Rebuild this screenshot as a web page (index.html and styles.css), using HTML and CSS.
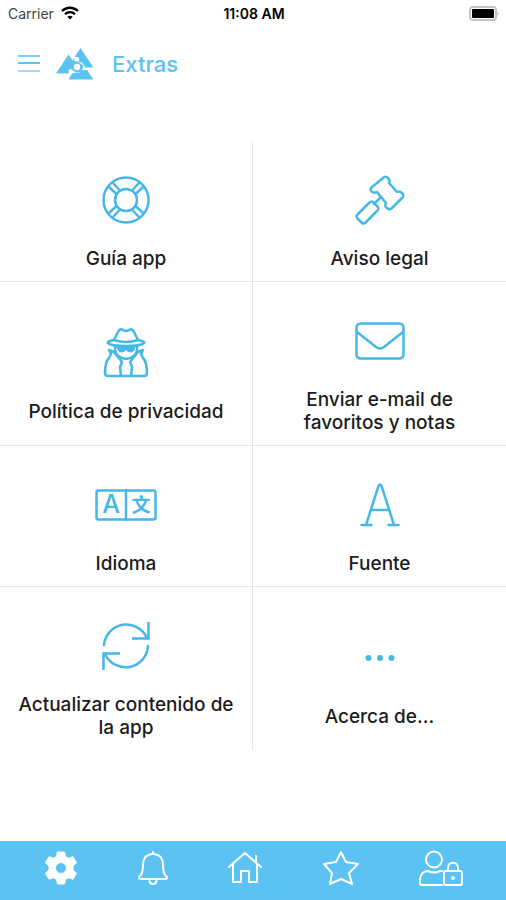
FILE: index.html
```html
<!DOCTYPE html>
<html lang="es">
<head>
    <meta charset="UTF-8">
    <meta name="viewport" content="width=device-width, initial-scale=1.0">
    <title>Extras</title>
    <link rel="stylesheet" href="styles.css">
</head>
<body>
    <div class="status_bar">
        <div class="carrier">
            <span>Carrier</span>
            <svg width="18" height="14" viewBox="0 0 18 14" fill="none" stroke="#000" stroke-width="2.4">
                <path d="M1 5C5.500 .7 12.500 .7 17 5"/>
                <path d="M4 8.200C7 5.500 11 5.500 14 8.200"/>
                <path d="M9 13.500L6.300 10.800Q9 8.700 11.700 10.800z" fill="#000" stroke="none"/>
            </svg>
        </div>
        <div class="clock">11:08 AM</div>
        <div class="battery">
            <svg width="31" height="15" viewBox="0 0 31 15">
                <rect x="1" y="1" width="26" height="13" rx="3" fill="#fff" stroke="#c4c4c4" stroke-width="2"/>
                <rect x="3" y="3" width="22" height="9" rx="1" fill="#000"/>
                <path d="M28.500 5.500q2 2 0 4z" fill="#aaa"/>
            </svg>
        </div>
    </div>

    <header class="top_bar">
        <button class="menu_btn" type="button" aria-label="Menú">
            <svg width="22" height="20" viewBox="0 0 22 20" stroke-width="2">
                <path d="M0 2h22" stroke="#7ccdf3"/>
                <path d="M0 9h22" stroke="#5bc2f1"/>
                <path d="M0 17h22" stroke="#a5d8f3"/>
            </svg>
        </button>
        <svg class="logo" width="38" height="32" viewBox="0 0 38 32">
            <path d="M24.500 0L37.500 19.500H28Q28 14 22 13.500Q25 10 21 9L18.500 9z"/>
            <path d="M12.500 6.500L18.500 15.500Q15 17 16 21Q13 20.500 12.500 23V25.500H0z"/>
            <path d="M12.500 31.500L17 24Q20.500 26.500 24.500 24Q25 21.500 28 22L31 22L37.500 31.500z"/>
            <path d="M17.500 10L22 13.500L28 18L26 23L21 25L15.500 21.500L15 16z"/>
            <circle cx="21" cy="19" r="3.200" fill="#fff"/>
            <path d="M17.500 11.500Q20 13.500 23 12M27.500 17.500Q29 21 26.500 22M14 21.500Q15 24.500 18 24.500" fill="none" stroke="#fff" stroke-width="1.500"/>
        </svg>
        <h1>Extras</h1>
    </header>

    <main class="tiles">
        <a class="tile" href="#guia">
            <span class="tile_icon">
                <svg width="50" height="50" viewBox="0 0 50 50">
                    <circle cx="25" cy="25" r="22.500"/>
                    <circle cx="25" cy="25" r="11"/>
                    <path d="M8 12l7.500 7M12 8l7 7.500M38 8l-7 7.500M42 12l-7.500 7M8 38l7.500-7M12 42l7-7.500M38 42l-7-7.500M42 38l-7.500-7"/>
                </svg>
            </span>
            <span>Guía app</span>
        </a>
        <a class="tile" href="#aviso">
            <span class="tile_icon">
                <svg width="50" height="50" viewBox="0 0 50 50">
                    <path d="M17 17c-2-2-2-3 0-5L28 3c2-2 3-2 5 0 2 2 2 3 1 5l8 9c2-1 3-1 5 1s2 3 0 5L37 33c-2 2-3 2-5 0-2-1-2-3-1-5l-9-11c-2 1-3 1-5 0z"/>
                    <path d="M26 22l-7 7"/>
                    <path d="M14 28L3 39c-2 2-2 3 0 5l3 3c2 2 3 2 5 0l11-11c2-2 2-3 0-5l-3-3c-2-2-3-2-5 0z"/>
                </svg>
            </span>
            <span>Aviso legal</span>
        </a>
        <a class="tile" href="#privacidad">
            <span class="tile_icon">
                <svg width="50" height="50" viewBox="0 0 50 50">
                    <path d="M13 12L17 4q2-4 5-2 3 2 6 0 3-2 5 2l4 8"/>
                    <path d="M13 12C8 13 6 14 7 15c3 3 11 3 18 3s15 0 18-3c1-1-1-2-6-3q-12 4-24 0z"/>
                    <path d="M14 18v4q1 8 11 9 10-1 11-9v-4"/>
                    <path d="M16 19h18l-1 3q-1 2-4 2-3 0-4-3-1 3-4 3-3 0-4-2z" fill="#45b8e8" stroke-width="1"/>
                    <path d="M13 24l-5-2 2 4-2 4c-4 4-4 11-4 15q0 3 3 3h36q3 0 3-3c0-4 0-11-4-15l-2-4 2-4-5 2"/>
                    <path d="M13 24l8 10-2 5 1 9M37 24l-8 10 2 5-1 9"/>
                </svg>
            </span>
            <span>Política de privacidad</span>
        </a>
        <a class="tile" href="#email">
            <span class="tile_icon">
                <svg width="50" height="38" viewBox="0 0 50 38">
                    <rect x="1.500" y="1.500" width="47" height="35" rx="4"/>
                    <path d="M2 10l19 15q4 3 8 0l19-15"/>
                </svg>
            </span>
            <span>Enviar e-mail de favoritos y notas</span>
        </a>
        <a class="tile" href="#idioma">
            <span class="tile_icon">
                <svg width="62" height="32" viewBox="0 0 62 32">
                    <rect x="1.500" y="1.500" width="59" height="29" rx="2"/>
                    <path d="M31 1v30"/>
                    <text class="glyph_latin" x="16" y="24">A</text>
                    <text class="glyph_cjk" x="46" y="23">文</text>
                </svg>
            </span>
            <span>Idioma</span>
        </a>
        <a class="tile" href="#fuente">
            <span class="tile_icon">
                <svg width="40" height="44" viewBox="0 0 40 44">
                    <path d="M6 42L18.500 3q1.500-3 3 0L34 42M10.500 27h19M1.500 42h10M28.500 42h10"/>
                </svg>
            </span>
            <span>Fuente</span>
        </a>
        <a class="tile" href="#actualizar">
            <span class="tile_icon">
                <svg width="50" height="50" viewBox="0 0 50 50">
                    <path d="M3 24A22.500 22.500 0 0 1 46 17M47 25A22.500 22.500 0 0 1 4 33"/>
                    <path d="M47.500 1v16.500H31M2.500 49V32.500H19" stroke-linejoin="miter" stroke-linecap="butt"/>
                </svg>
            </span>
            <span>Actualizar contenido de la app</span>
        </a>
        <a class="tile" href="#acerca">
            <span class="tile_icon">
                <svg class="dots" width="30" height="8" viewBox="0 0 30 8">
                    <circle cx="3.500" cy="4" r="3"/>
                    <circle cx="15" cy="4" r="3"/>
                    <circle cx="26.500" cy="4" r="3"/>
                </svg>
            </span>
            <span>Acerca de...</span>
        </a>
    </main>

    <nav class="tab_bar">
        <a href="#ajustes" aria-label="Ajustes">
            <svg width="32" height="34" viewBox="0 0 32 34">
                <path fill="#fff" fill-rule="evenodd" stroke-width="1" d="M12.500 1h7l1 4.500 3 1.700 4.500-1.500 3.500 6L28 15v4l3.500 3.300-3.500 6-4.500-1.500-3 1.700-1 4.500h-7l-1-4.500-3-1.700L4 28.300l-3.500-6L4 19v-4L.5 11.700l3.500-6 4.500 1.500 3-1.700zM16 11.500a5.500 5.500 0 1 0 0 11 5.500 5.500 0 1 0 0-11z"/>
            </svg>
        </a>
        <a href="#avisos" aria-label="Avisos">
            <svg width="30" height="34" viewBox="0 0 30 34">
                <path d="M15 1v2M15 3C8 3 5 8 5 14c0 7-1 9-3 11-2 2-1 3 1 3h24c2 0 3-1 1-3-2-2-3-4-3-11 0-6-3-11-10-11zM11.500 30q.5 3 3.500 3t3.500-3"/>
            </svg>
        </a>
        <a href="#inicio" aria-label="Inicio">
            <svg width="34" height="34" viewBox="0 0 34 34">
                <path d="M1 16L17 2l16 14M28 11V5M5 13v18h8V20h8v11h8V13"/>
            </svg>
        </a>
        <a href="#favoritos" aria-label="Favoritos">
            <svg width="36" height="34" viewBox="0 0 36 34">
                <path d="M18 1l5 10 12 2-9 9 3 11-11-5-11 5 2-11-8-9 12-2z"/>
            </svg>
        </a>
        <a href="#cuenta" aria-label="Cuenta">
            <svg width="44" height="36" viewBox="0 0 44 36">
                <circle cx="15" cy="9.500" r="8"/>
                <path d="M23 35H3q-2 0-2-2v-3c0-5 3-9 8-9 4 2 8 2 12 0h2"/>
                <rect x="25" y="21" width="18" height="14" rx="2"/>
                <path d="M29 21v-3c0-7 10-7 10 0v3"/>
                <circle cx="34" cy="28" r="1.500" fill="#fff" stroke-width="1"/>
            </svg>
        </a>
    </nav>
</body>
</html>
```
FILE: styles.css
```css
* {
    box-sizing: border-box;
}

body {
    margin: 0;
    min-height: 100vh;
    display: flex;
    flex-direction: column;
    background-color: #fff;
    color: #1c1c1c;
    font-family: Inter, "Liberation Sans", sans-serif;
}

svg {
    display: block;
}

a {
    color: inherit;
    text-decoration: none;
}

.status_bar {
    display: grid;
    grid-template-columns: 1fr auto 1fr;
    align-items: center;
    height: 26px;
    padding: 0 6px 0 8px;
    font-size: 14px;
}

.carrier {
    display: flex;
    align-items: center;
    gap: 7px;
    color: #444;
}

.clock {
    color: #000;
    font-weight: 600;
}

.battery {
    justify-self: end;
}

.top_bar {
    display: flex;
    align-items: center;
    height: 75px;
    padding: 0 18px;
}

.menu_btn {
    padding: 0;
    border: 0;
    background: none;
    cursor: pointer;
}

.logo {
    margin: 0 18px 0 16px;
    fill: #5bc2f1;
}

.top_bar h1 {
    margin: 0;
    color: #5bc2f1;
    font-size: 22px;
    font-weight: 500;
}

.tiles {
    display: grid;
    grid-template-columns: 1fr 1fr;
    margin: 40px 0;
}

.tile {
    display: flex;
    flex-direction: column;
    justify-content: center;
    padding: 12px 14px 11px;
    border-bottom: 1px solid #e6e6e6;
    font-size: 19px;
    font-weight: 500;
    line-height: 23px;
    text-align: center;
}

.tile:nth-child(odd) {
    border-right: 1px solid #e6e6e6;
}

.tile:nth-last-child(-n+2) {
    border-bottom: 0;
}

.tile_icon {
    display: flex;
    align-items: center;
    justify-content: center;
    height: 94px;
}

.tile_icon svg {
    fill: none;
    stroke: #45b8e8;
    stroke-width: 2.5;
    stroke-linecap: round;
    stroke-linejoin: round;
}

.tile_icon .dots {
    fill: #45b8e8;
    stroke: none;
}

.tile_icon text {
    fill: #45b8e8;
    stroke: none;
    text-anchor: middle;
}

.glyph_latin {
    font-size: 25px;
    font-weight: 500;
}

.glyph_cjk {
    font-family: "Noto Sans CJK SC", sans-serif;
    font-size: 19px;
    font-weight: 700;
}

.tab_bar {
    display: flex;
    align-items: center;
    justify-content: space-between;
    height: 59px;
    margin-top: auto;
    padding: 0 43px 6px 45px;
    background-color: #5bc2f1;
}

.tab_bar svg {
    fill: none;
    stroke: #fff;
    stroke-width: 2;
    stroke-linecap: round;
    stroke-linejoin: round;
}
```
